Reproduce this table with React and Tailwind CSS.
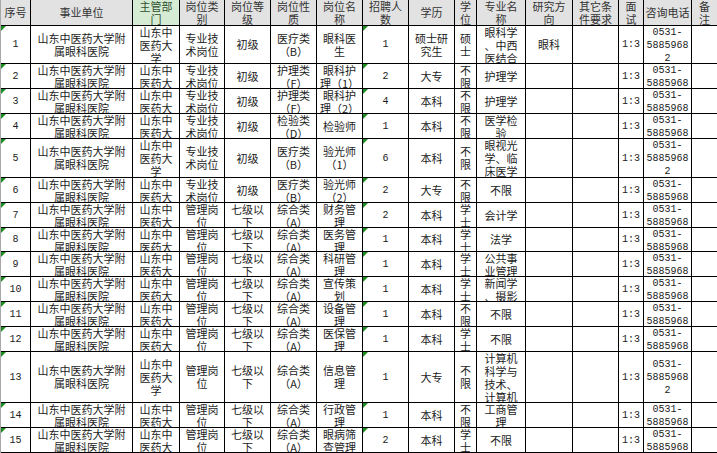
import React from 'react';

const UNIT = ['山东中医药大学附', '属眼科医院'];
const DEPT = ['山东中', '医药大', '学'];
const PHONE = ['0531-', '5885968', '2'];
const TECH = ['专业技', '术岗位'];
const MGMT = ['管理岗', '位'];
const LOW = ['七级以', '下'];
const ZONGHE = ['综合类', '（A）'];

const headers = [
  ['序号'],
  ['事业单位'],
  ['主管部', '门'],
  ['岗位类', '别'],
  ['岗位等', '级'],
  ['岗位性', '质'],
  ['岗位名', '称'],
  ['招聘人', '数'],
  ['学历'],
  ['学', '位'],
  ['专业名', '称'],
  ['研究方', '向'],
  ['其它条', '件要求'],
  ['面', '试'],
  ['咨询电话'],
  ['备', '注'],
];

const rows = [
  { n: '1', h: 37, type: TECH, lvl: ['初级'], nature: ['医疗类', '（B）'], name: ['眼科医', '生'], cnt: '1', edu: ['硕士研', '究生'], deg: ['硕', '士'], major: ['眼科学', '、中西', '医结合'], dir: ['眼科'] },
  { n: '2', h: 24, type: TECH, lvl: ['初级'], nature: ['护理类', '（F）'], name: ['眼科护', '理（1）'], cnt: '2', edu: ['大专'], deg: ['不', '限'], major: ['护理学'] },
  { n: '3', h: 24, type: TECH, lvl: ['初级'], nature: ['护理类', '（F）'], name: ['眼科护', '理（2）'], cnt: '4', edu: ['本科'], deg: ['不', '限'], major: ['护理学'] },
  { n: '4', h: 24, type: TECH, lvl: ['初级'], nature: ['检验类', '（D）'], name: ['检验师'], cnt: '1', edu: ['本科'], deg: ['不', '限'], major: ['医学检', '验'] },
  { n: '5', h: 38, type: TECH, lvl: ['初级'], nature: ['医疗类', '（B）'], name: ['验光师', '（1）'], cnt: '6', edu: ['本科'], deg: ['不', '限'], major: ['眼视光', '学、临', '床医学'] },
  { n: '6', h: 24, type: TECH, lvl: ['初级'], nature: ['医疗类', '（B）'], name: ['验光师', '（2）'], cnt: '2', edu: ['大专'], deg: ['不', '限'], major: ['不限'] },
  { n: '7', h: 24, type: MGMT, lvl: LOW, nature: ZONGHE, name: ['财务管', '理'], cnt: '2', edu: ['本科'], deg: ['学', '士'], major: ['会计学'] },
  { n: '8', h: 23, type: MGMT, lvl: LOW, nature: ZONGHE, name: ['医务管', '理'], cnt: '1', edu: ['本科'], deg: ['学', '士'], major: ['法学'] },
  { n: '9', h: 24, type: MGMT, lvl: LOW, nature: ZONGHE, name: ['科研管', '理'], cnt: '1', edu: ['本科'], deg: ['学', '士'], major: ['公共事', '业管理'] },
  { n: '10', h: 24, type: MGMT, lvl: LOW, nature: ZONGHE, name: ['宣传策', '划'], cnt: '1', edu: ['本科'], deg: ['学', '士'], major: ['新闻学', '、摄影'] },
  { n: '11', h: 24, type: MGMT, lvl: LOW, nature: ZONGHE, name: ['设备管', '理'], cnt: '1', edu: ['本科'], deg: ['不', '限'], major: ['不限'] },
  { n: '12', h: 24, type: MGMT, lvl: LOW, nature: ZONGHE, name: ['医保管', '理'], cnt: '1', edu: ['本科'], deg: ['学', '士'], major: ['不限'] },
  { n: '13', h: 50, type: MGMT, lvl: LOW, nature: ZONGHE, name: ['信息管', '理'], cnt: '1', edu: ['大专'], deg: ['不', '限'], major: ['计算机', '科学与', '技术、', '计算机', '应用技'] },
  { n: '14', h: 24, type: MGMT, lvl: LOW, nature: ZONGHE, name: ['行政管', '理'], cnt: '1', edu: ['本科'], deg: ['不', '限'], major: ['工商管', '理'] },
  { n: '15', h: 24, type: MGMT, lvl: LOW, nature: ZONGHE, name: ['眼病筛', '查管理'], cnt: '2', edu: ['本科'], deg: ['学', '士'], major: ['不限'] },
];

const Flag = () => (
  <span className="absolute left-0 top-0 h-0 w-0 border-t-[5px] border-r-[5px] border-t-[#1e8c1e] border-r-transparent" />
);

// lines taller than the row start at the top and get clipped, like excel does
const Cell = ({ lines = [], h, mono, flag, className = 'bg-white' }) => {
  const tall = lines.length * 13 > h;
  return (
    <div
      className={`relative flex flex-col items-center overflow-hidden text-center leading-[13px] ${
        tall ? 'justify-start' : 'justify-center'
      } ${mono ? "font-['Liberation_Mono',monospace] text-[10px]" : 'text-[11px]'} ${className}`}
    >
      {flag && <Flag />}
      {lines.map((l, i) => (
        <div key={i} className="shrink-0 whitespace-nowrap">
          {l}
        </div>
      ))}
    </div>
  );
};

export default function App() {
  return (
    <div className="h-[453px] w-[717px] overflow-hidden bg-white font-['Noto_Sans_CJK_SC','Noto_Sans',sans-serif] text-[#1c1c1c]">
      <div className="border-l border-[#a8a8a8]">
        <div className="grid grid-cols-[29px_101px_46px_44px_45px_45px_45px_45px_45px_21px_48px_46px_45px_24px_47px_25px] grid-rows-[25px_37px_24px_24px_24px_38px_24px_24px_23px_24px_24px_24px_24px_50px_24px_24px] gap-px bg-black pb-px">
          {headers.map((hd, i) => (
            <Cell
              key={i}
              lines={hd}
              h={25}
              className={i === 2 ? 'bg-[#d6ebd3] text-[#2f4f2f]' : 'bg-[#e2e2e2] text-[#333]'}
            />
          ))}
          {rows.map((r) => (
            <React.Fragment key={r.n}>
              <Cell lines={[r.n]} h={r.h} mono flag />
              <Cell lines={UNIT} h={r.h} />
              <Cell lines={DEPT} h={r.h} />
              <Cell lines={r.type} h={r.h} />
              <Cell lines={r.lvl} h={r.h} />
              <Cell lines={r.nature} h={r.h} />
              <Cell lines={r.name} h={r.h} />
              <Cell lines={[r.cnt]} h={r.h} mono flag />
              <Cell lines={r.edu} h={r.h} />
              <Cell lines={r.deg} h={r.h} />
              <Cell lines={r.major} h={r.h} />
              <Cell lines={r.dir || []} h={r.h} />
              <Cell lines={[]} h={r.h} />
              <Cell lines={['1:3']} h={r.h} mono />
              <Cell lines={PHONE} h={r.h} mono />
              <Cell lines={[]} h={r.h} />
            </React.Fragment>
          ))}
        </div>
      </div>
    </div>
  );
}
